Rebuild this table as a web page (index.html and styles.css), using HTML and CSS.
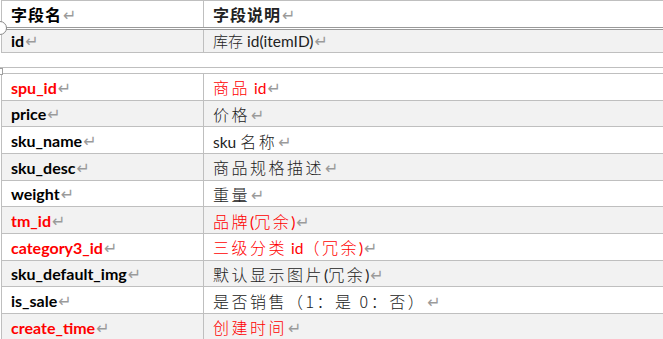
FILE: index.html
```html
<!DOCTYPE html>
<html lang="zh">
<head>
<meta charset="utf-8">
<link rel="stylesheet" href="styles.css">
</head>
<body>
<div class="page">
  <table class="tbl tbl-top">
    <tr class="head">
      <td class="c1"><span class="zh-h">字段名</span><span class="rm">↵</span></td>
      <td class="c2"><span class="zh-h">字段说明</span><span class="rm">↵</span></td>
    </tr>
    <tr class="grey">
      <td class="c1"><b>id</b><span class="rm">↵</span></td>
      <td class="c2"><span class="zh1">库存</span> id(itemID)<span class="rm">↵</span></td>
    </tr>
  </table>
  <div class="rule"></div>
  <table class="tbl tbl-main">
    <tr class="red"><td class="c1"><b>spu_id</b><span class="rm">↵</span></td><td class="c2"><span class="zh">商品</span> id<span class="rm">↵</span></td></tr>
    <tr class="grey"><td class="c1"><b>price</b><span class="rm">↵</span></td><td class="c2"><span class="zh">价格</span><span class="rm">↵</span></td></tr>
    <tr><td class="c1"><b>sku_name</b><span class="rm">↵</span></td><td class="c2">sku <span class="zh">名称</span><span class="rm">↵</span></td></tr>
    <tr class="grey"><td class="c1"><b>sku_desc</b><span class="rm">↵</span></td><td class="c2"><span class="zh">商品规格描述</span><span class="rm">↵</span></td></tr>
    <tr><td class="c1"><b>weight</b><span class="rm">↵</span></td><td class="c2"><span class="zh">重量</span><span class="rm">↵</span></td></tr>
    <tr class="grey red"><td class="c1"><b>tm_id</b><span class="rm">↵</span></td><td class="c2"><span class="zh">品牌</span>(<span class="zh">冗余</span>)<span class="rm">↵</span></td></tr>
    <tr class="red"><td class="c1"><b>category3_id</b><span class="rm">↵</span></td><td class="c2"><span class="zh">三级分类</span> id<span class="zh">（冗余</span>)<span class="rm">↵</span></td></tr>
    <tr class="grey"><td class="c1"><b>sku_default_img</b><span class="rm">↵</span></td><td class="c2"><span class="zh">默认显示图片</span>(<span class="zh">冗余</span>)<span class="rm">↵</span></td></tr>
    <tr><td class="c1"><b>is_sale</b><span class="rm">↵</span></td><td class="c2"><span class="zh">是否销售（1：是 0：否）</span><span class="rm">↵</span></td></tr>
    <tr class="grey red"><td class="c1"><b>create_time</b><span class="rm">↵</span></td><td class="c2"><span class="zh">创建时间</span><span class="rm">↵</span></td></tr>
  </table>
  <div class="handle"></div>
  <div class="mark"></div>
</div>
</body>
</html>
```
FILE: styles.css
```css
html, body {
  margin: 0;
  padding: 0;
  background: #fff;
  overflow: hidden;
}
.page {
  position: relative;
  width: 663px;
  height: 339px;
  overflow: hidden;
  font-family: Lato, "Liberation Sans", "Noto Sans CJK SC", sans-serif;
  font-size: 15.5px;
  line-height: 20px;
  color: #000;
}
.tbl {
  border-collapse: collapse;
  table-layout: fixed;
  width: 720px;
  margin-left: 1px;
}
.tbl td {
  border: 1px solid #bfbfbf;
  padding: 0 0 0 9px;
  white-space: nowrap;
  vertical-align: middle;
}
.tbl td.c1 { width: 192px; }
.tbl td.c2 { width: 508px; }
.c1 b {
  font-size: 16px;
  font-weight: 700;
}
.tbl-top { border-top: 1px solid #bfbfbf; }
.tbl-top tr.head td {
  height: 26px;
  border-top: 1px solid #bfbfbf;
  border-bottom: 3px double #9a9a9a;
}
.tbl-top tr.grey td { height: 22px; }
.zh-h {
  font-family: "Noto Sans CJK SC", sans-serif;
  font-weight: 700;
  font-size: 16px;
  letter-spacing: 1px;
}
.zh1 {
  font-family: "Noto Sans CJK SC", sans-serif;
  font-size: 15px;
  font-weight: 300;
}
.zh {
  font-family: "Noto Sans CJK SC", sans-serif;
  font-size: 16px;
  font-weight: 300;
  letter-spacing: 2.5px;
}
.c2 { color: #222; }
.rule {
  height: 0;
  border-top: 1px solid #bfbfbf;
  margin-top: 14px;
  margin-bottom: 5px;
}
.tbl-main tr td {
  height: 23.67px;
  padding-top: 2px;
}
tr.grey td { background: #f2f2f2; }
tr.red td { color: #ff0000; }
.rm {
  font-family: "DejaVu Sans", sans-serif;
  font-size: 16px;
  line-height: 16px;
  color: #9a9a9a;
  font-weight: 400;
  letter-spacing: 0;
  margin-left: 1px;
}
.handle {
  position: absolute;
  left: -7px;
  top: 21px;
  width: 12px;
  height: 12px;
  border: 1px solid #8a8a8a;
  border-radius: 50%;
  background: #fff;
}
.mark {
  position: absolute;
  left: -1px;
  top: 68px;
  width: 2px;
  height: 5px;
  border: 1px solid #a0a0a0;
  background: #fff;
}
```
